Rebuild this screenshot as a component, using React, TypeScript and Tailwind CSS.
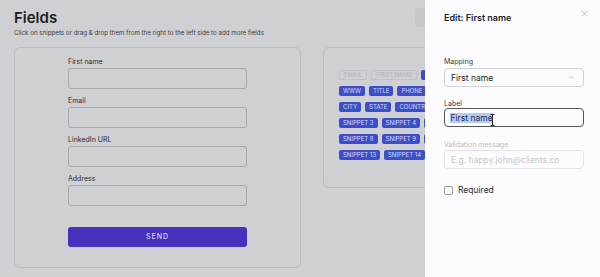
import { X, ChevronDown } from "lucide-react";

// only the snippets that peek out from under the drawer
const rows = [
  ["EMAIL", "FIRST NAME", "LAST NAME"],
  ["WWW", "TITLE", "PHONE"],
  ["CITY", "STATE", "COUNTRY"],
  ["SNIPPET 3", "SNIPPET 4", "SNIPPET 5"],
  ["SNIPPET 8", "SNIPPET 9", "SNIPPET 10"],
  ["SNIPPET 13", "SNIPPET 14"],
];

const used = ["EMAIL", "FIRST NAME"];

const fields = ["First name", "Email", "LinkedIn URL", "Address"];

function Chip({ label }: { label: string }) {
  const off = used.includes(label);
  return (
    <span
      className={
        off
          ? "h-[10px] px-[4px] rounded-[2px] border border-[#c2c3c8] text-[#b2b3b8] text-[6px] leading-[8px] flex items-center shrink-0"
          : "h-[10px] px-[4px] rounded-[2px] bg-[#3b4fc9] text-[#d6dbf5] text-[6px] leading-[10px] flex items-center shrink-0"
      }
    >
      {label}
    </span>
  );
}

export default function App() {
  return (
    <div className="relative w-[600px] h-[277px] overflow-hidden bg-[#cfd0d4] font-['Inter','Noto_Sans',sans-serif] text-[#1d1e22]">
      {/* page behind the overlay */}
      <div className="pl-[14px] pt-[8px]">
        <div className="flex justify-between w-[457px]">
          <h1 className="text-[15px] leading-[20px] font-semibold">Fields</h1>
          <div className="w-[56px] h-[19px] rounded-[3px] bg-[#c7c8cc]" />
        </div>
        <p className="text-[6.2px] leading-[10px] text-[#3a3b40]">
          Click on snippets or drag &amp; drop them from the right to the left side to add more fields
        </p>

        <div className="flex gap-[22px] mt-[9px] items-start">
          <div className="w-[287px] border border-[#bdbec3] rounded-[6px] pt-[9px] pb-[20px]">
            <div className="w-[179px] mx-auto flex flex-col gap-[7px]">
              {fields.map((f) => (
                <div key={f} className="flex flex-col gap-[1px]">
                  <label className="text-[7px] leading-[10px] h-[10px] text-[#2a2b30]">{f}</label>
                  <div className="h-[21px] rounded-[3px] border border-[#a7a8ad]" />
                </div>
              ))}
            </div>
            <div className="w-[179px] mx-auto mt-[21px] h-[20px] rounded-[3px] bg-[#4630bc] flex items-center justify-center text-[7px] leading-[10px] tracking-[1px] font-medium text-[#d9d5f1]">
              SEND
            </div>
          </div>

          <div className="w-[110px] h-[141px] overflow-hidden border border-[#bdbec3] rounded-l-[6px] pt-[22px] pl-[15px] flex flex-col gap-[6px]">
            {rows.map((r, i) => (
              <div key={i} className="flex gap-[4px] whitespace-nowrap">
                {r.map((c) => (
                  <Chip key={c} label={c} />
                ))}
              </div>
            ))}
          </div>
        </div>
      </div>

      {/* edit drawer */}
      <div className="absolute top-0 right-0 w-[175px] h-full bg-[#fcfcfe] pl-[19px] pr-[16px] pt-[12px]">
        <X className="absolute top-[9px] right-[11px] w-[9px] h-[9px] text-[#8a8b90]" strokeWidth={1.5} />
        <div className="text-[9px] leading-[12px] font-semibold text-[#222328]">Edit: First name</div>

        <div className="mt-[33px] text-[7px] leading-[9px] text-[#3a3b40]">Mapping</div>
        <div className="mt-[2px] h-[19px] rounded-[4px] border border-[#d2d3d8] flex items-center justify-between pl-[6px] pr-[8px]">
          <span className="text-[8.5px] leading-[10px] text-[#222328]">First name</span>
          <ChevronDown className="w-[7px] h-[7px] text-[#8a8b90]" strokeWidth={2} />
        </div>

        <div className="mt-[12px] text-[7px] leading-[9px] text-[#3a3b40]">Label</div>
        <div className="relative h-[19px] rounded-[4px] border-[1.5px] border-[#55565b] flex items-center pl-[5px]">
          <span className="text-[8.5px] leading-[10px] bg-[#b5cbf6] text-[#1e2a55] px-[0.5px]">First name</span>
          <svg className="absolute left-[45px] top-[5px]" width="5" height="12" viewBox="0 0 5 12">
            <path d="M0.5 0.5h4M2.5 0.5v11M0.5 11.5h4" stroke="#222" strokeWidth="1" fill="none" />
          </svg>
        </div>

        <div className="mt-[13px] text-[7px] leading-[9px] text-[#bdbec3]">Validation message</div>
        <div className="mt-[1px] h-[19px] rounded-[4px] border border-[#e3e3e7] flex items-center pl-[6px]">
          <span className="text-[8.5px] leading-[10px] text-[#c6c7cc]">E.g. happy.john@clients.co</span>
        </div>

        <div className="mt-[16px] flex items-center gap-[5px]">
          <div className="w-[9px] h-[9px] rounded-[2px] border border-[#9a9ba0]" />
          <span className="text-[8.5px] leading-[10px] text-[#2a2b30]">Required</span>
        </div>
      </div>
    </div>
  );
}
